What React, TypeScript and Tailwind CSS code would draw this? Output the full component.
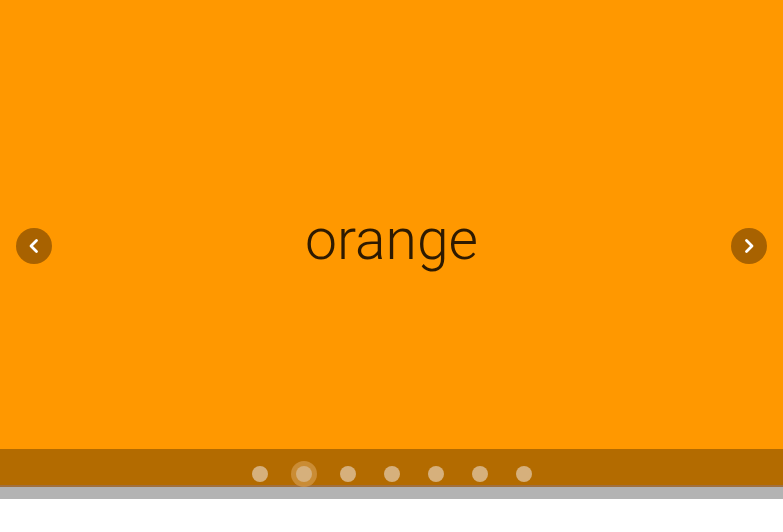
import React from "react";

export default function App() {
  const dots = [0, 1, 2, 3, 4, 5, 6];
  return (
    <div className="w-[783px] h-[532px] bg-white" style={{ fontFamily: "Roboto, sans-serif" }}>
      <div className="relative h-[449px] bg-[#ff9800] flex items-center justify-center">
        <span className="text-[57px] font-light text-[#2e1a00] leading-none mt-[30px]">orange</span>
        <button className="absolute left-[16px] top-[228px] w-[36px] h-[36px] rounded-full bg-[#a86200] flex items-center justify-center">
          <svg width="16" height="16" viewBox="0 0 16 16" fill="none">
            <path d="M10.5 2.5 L5 8 L10.5 13.5" stroke="white" strokeWidth="2.8" strokeLinecap="round" strokeLinejoin="round" />
          </svg>
        </button>
        <button className="absolute left-[731px] top-[228px] w-[36px] h-[36px] rounded-full bg-[#a86200] flex items-center justify-center">
          <svg width="16" height="16" viewBox="0 0 16 16" fill="none">
            <path d="M5.5 2.5 L11 8 L5.5 13.5" stroke="white" strokeWidth="2.8" strokeLinecap="round" strokeLinejoin="round" />
          </svg>
        </button>
      </div>
      <div className="h-[38px] bg-[#b36b00] flex items-end justify-center gap-[28px] pb-[3px] border-b-2 border-[#a07040]">
        {dots.map((d) =>
          d === 1 ? (
            <div key={d} className="w-[16px] h-[16px] rounded-full bg-[#d6b07c] ring-[5px] ring-[#d49a4a]/70" />
          ) : (
            <div key={d} className="w-[16px] h-[16px] rounded-full bg-[#d6b07c]" />
          )
        )}
      </div>
      <div className="h-[12px] bg-[#b3b3b3]" />
    </div>
  );
}
